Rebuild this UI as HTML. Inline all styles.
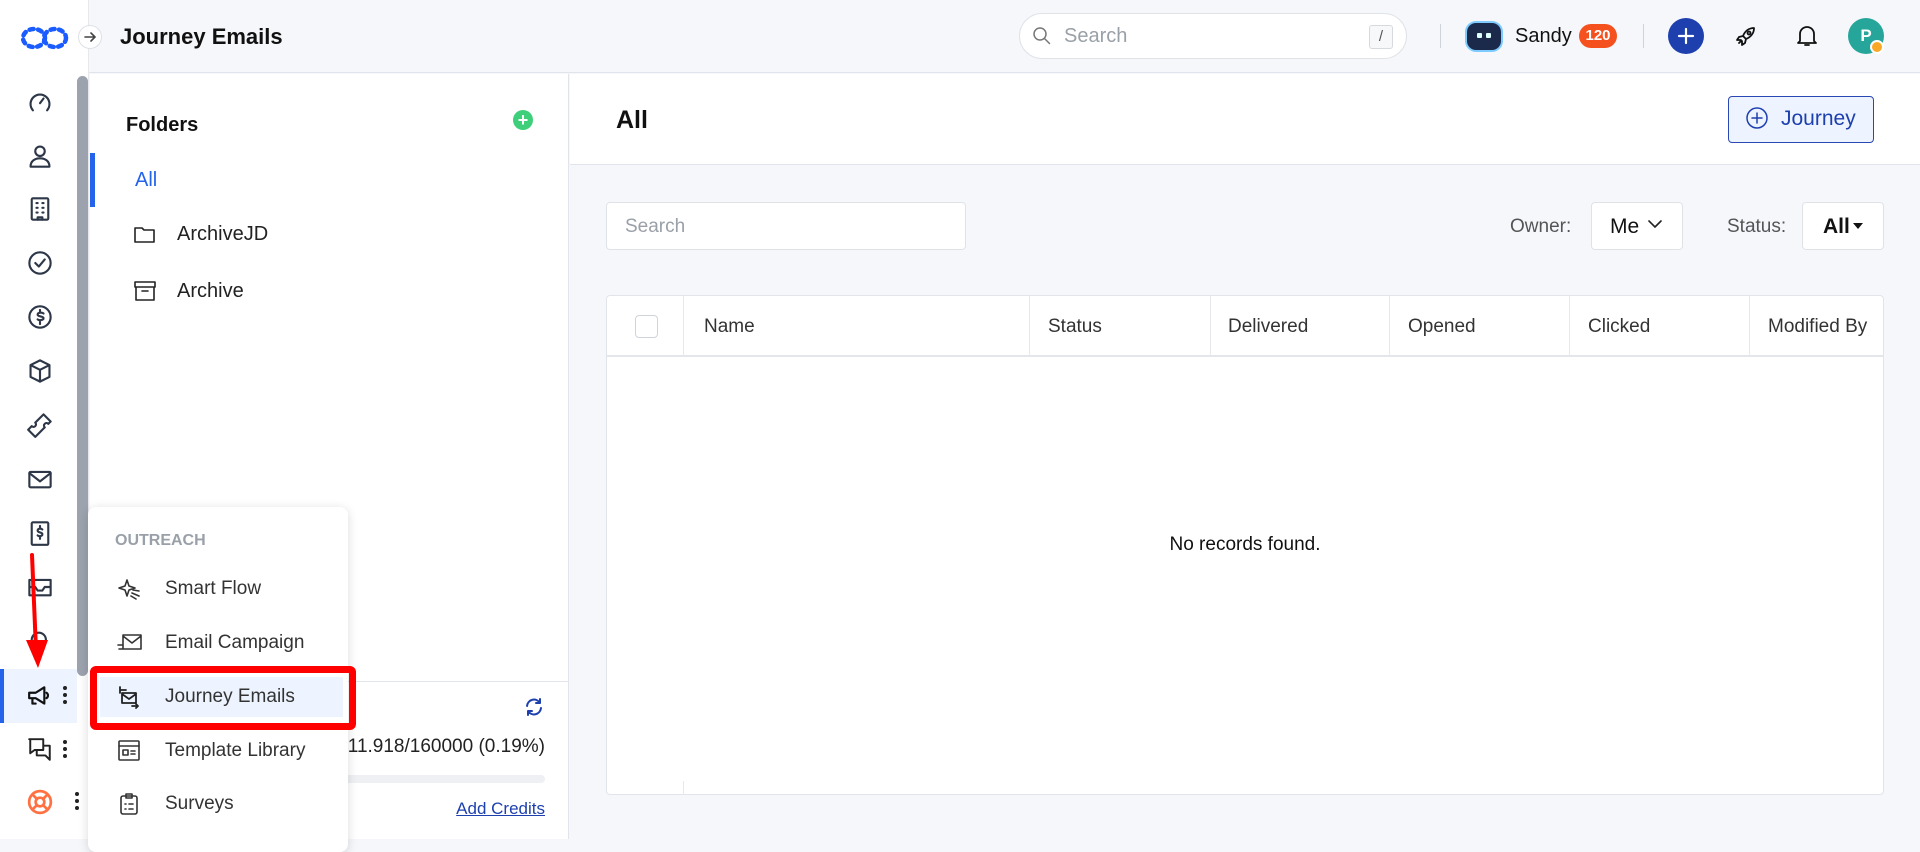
<!DOCTYPE html>
<html><head><meta charset="utf-8"><style>
*{box-sizing:border-box;margin:0;padding:0}
body{width:1920px;height:839px;overflow:hidden;background:#f5f7fb;font-family:"Liberation Sans",sans-serif;color:#1f2328;position:relative}
.abs{position:absolute}
.ic{position:absolute;fill:none;stroke:#2d3748;stroke-width:1.8;stroke-linecap:round;stroke-linejoin:round}
</style></head><body>
<div class="abs" style="left:0;top:0;width:1920px;height:73px;background:#f5f7fb;border-bottom:1px solid #e1e4ea"></div>
<div class="abs" style="left:0;top:0;width:89px;height:839px;background:#fff;border-right:1px solid #e6e8ec"></div>
<svg class="abs" style="left:20px;top:26px" width="50" height="24" viewBox="0 0 50 24"><g fill="none" stroke="#1a5cff" stroke-width="4.5" stroke-dasharray="4 4.5" stroke-linecap="round"><ellipse cx="14" cy="12" rx="11" ry="9"/><ellipse cx="35" cy="12" rx="11" ry="9"/></g></svg>
<div class="abs" style="left:78px;top:25px;width:24px;height:24px;border-radius:50%;background:#fff;border:1px solid #dde1e6"></div>
<svg class="abs" style="left:82px;top:29px" width="16" height="16" viewBox="0 0 16 16"><path d="M3 8h10M9 4l4 4-4 4" fill="none" stroke="#444" stroke-width="1.6" stroke-linecap="round"/></svg>
<div class="abs" style="left:120px;top:24px;font-size:22px;font-weight:bold;color:#111">Journey Emails</div>
<div class="abs" style="left:1019px;top:13px;width:388px;height:46px;border-radius:23px;background:#fff;border:1px solid #dfe3e8"></div>
<svg class="ic" style="left:1032px;top:26px;stroke:#777;stroke-width:1.5" width="20" height="20" viewBox="0 0 20 20"><circle cx="8" cy="8" r="6"/><path d="M12.5 12.5l5 5"/></svg>
<div class="abs" style="left:1064px;top:25px;font-size:20px;color:#9aa0a8">Search</div>
<div class="abs" style="left:1369px;top:25px;width:24px;height:24px;border:1px solid #d6d9de;border-radius:3px;background:#f7f8fa;font-size:15px;color:#555;text-align:center;line-height:22px">/</div>
<div class="abs" style="left:1440px;top:24px;width:1px;height:24px;background:#d0d4da"></div>
<div class="abs" style="left:1467px;top:23px;width:34px;height:27px;border-radius:9px;background:#1b2a4a;box-shadow:0 0 0 2px #7ecbff"></div>
<div class="abs" style="left:1477px;top:33px;width:5px;height:5px;background:#dff;border-radius:1px"></div><div class="abs" style="left:1486px;top:33px;width:5px;height:5px;background:#dff;border-radius:1px"></div>
<div class="abs" style="left:1515px;top:25px;font-size:20px;color:#111">Sandy</div>
<div class="abs" style="left:1579px;top:24px;width:38px;height:24px;border-radius:12px;background:#f4511e;color:#fff;font-size:15px;font-weight:bold;text-align:center;line-height:24px">120</div>
<div class="abs" style="left:1643px;top:24px;width:1px;height:24px;background:#d0d4da"></div>
<div class="abs" style="left:1668px;top:18px;width:36px;height:36px;border-radius:50%;background:#1e3fae"></div>
<svg class="abs" style="left:1676px;top:26px" width="20" height="20"><path d="M10 3v14M3 10h14" stroke="#fff" stroke-width="2.2" stroke-linecap="round"/></svg>
<svg class="ic" style="left:1734px;top:24px;stroke:#111" width="24" height="24" viewBox="0 0 24 24"><path d="M20 4c-5 0-9 3-11 8l3 3c5-2 8-6 8-11zM9 12l-4 1-2 3 4 0M12 15l-1 4-3 2 0-4M5 19l2-2"/><circle cx="15" cy="9" r="1.5"/></svg>
<svg class="ic" style="left:1796px;top:24px;stroke:#111" width="22" height="24" viewBox="0 0 22 24"><path d="M4 17V10a7 7 0 0 1 14 0v7l2 2H2zM9 21h4"/></svg>
<div class="abs" style="left:1848px;top:18px;width:36px;height:36px;border-radius:50%;background:#26a69a;color:#fff;font-weight:bold;font-size:17px;text-align:center;line-height:36px">P</div>
<div class="abs" style="left:1870px;top:40px;width:14px;height:14px;border-radius:50%;background:#f9a825;border:2px solid #fff"></div>

<svg class="ic" style="left:27px;top:89px" width="26" height="26" viewBox="0 0 22 22"><path d="M5 18a8 8 0 1 1 12 0M11 12l3-4"/></svg>
<svg class="ic" style="left:27px;top:143px" width="26" height="26" viewBox="0 0 22 22"><circle cx="11" cy="7" r="4"/><path d="M3 20c0-5 4-7 8-7s8 2 8 7z"/></svg>
<svg class="ic" style="left:27px;top:196px" width="26" height="26" viewBox="0 0 22 22"><rect x="4" y="2" width="14" height="18" rx="1"/><path d="M8 6h1M13 6h1M8 10h1M13 10h1M8 14h1M13 14h1M9 20v-2h4v2"/></svg>
<svg class="ic" style="left:27px;top:250px" width="26" height="26" viewBox="0 0 22 22"><circle cx="11" cy="11" r="9"/><path d="M7 11l3 3 5-6"/></svg>
<svg class="ic" style="left:27px;top:304px" width="26" height="26" viewBox="0 0 22 22"><circle cx="11" cy="11" r="9"/><path d="M14 8c-1-1-5-1-5 1s5 1 5 3-4 2-5 1M11 5v2M11 15v2"/></svg>
<svg class="ic" style="left:27px;top:358px" width="26" height="26" viewBox="0 0 22 22"><path d="M11 2l8 4v10l-8 4-8-4V6zM3 6l8 4 8-4M11 10v10"/></svg>
<svg class="ic" style="left:27px;top:412px" width="26" height="26" viewBox="0 0 22 22"><path d="M14 2l6 6-2 2a2 2 0 0 0-3 3l-2 2L7 21l-6-6 3-3a2 2 0 0 0 3-3z"/></svg>
<svg class="ic" style="left:27px;top:466px" width="26" height="26" viewBox="0 0 22 22"><rect x="2" y="5" width="18" height="13" rx="1"/><path d="M2 6l9 7 9-7"/></svg>
<svg class="ic" style="left:27px;top:520px" width="26" height="26" viewBox="0 0 22 22"><rect x="4" y="2" width="14" height="19" rx="1"/><path d="M13 8c-1-1-4-1-4 1s4 1 4 3-3 2-4 1M11 5v2M11 14v2"/></svg>
<svg class="ic" style="left:27px;top:574px" width="26" height="26" viewBox="0 0 22 22"><path d="M2 5h18v13H2zM2 11h5l2 3h4l2-3h5"/></svg>
<svg class="ic" style="left:27px;top:628px" width="26" height="26" viewBox="0 0 22 22"><path d="M4 10a6 6 0 0 1 12 0M4 10v6h4M16 10l-2 6"/></svg>
<div class="abs" style="left:0;top:669px;width:77px;height:54px;background:#eef4ff"></div>
<div class="abs" style="left:0;top:669px;width:4px;height:54px;background:#2563eb"></div>
<svg class="ic" style="left:27px;top:684px;stroke:#111;stroke-width:2" width="26" height="24" viewBox="0 0 24 22"><path d="M2 8h6l8-5v15l-8-5H2zM5 13v5h3M18 8a3 3 0 0 1 0 5"/></svg>
<div class="abs" style="left:63px;top:686px;width:4px;height:4px;border-radius:50%;background:#222;box-shadow:0 7px 0 #222,0 14px 0 #222"></div>
<svg class="ic" style="left:27px;top:737px;stroke:#222" width="26" height="26" viewBox="0 0 24 24"><path d="M2 2h13v10H7l-4 3V2zM9 12v5h8l4 4V8h-6"/></svg>
<div class="abs" style="left:63px;top:740px;width:4px;height:4px;border-radius:50%;background:#222;box-shadow:0 7px 0 #222,0 14px 0 #222"></div>
<svg class="abs" style="left:27px;top:789px" width="26" height="26" viewBox="0 0 24 24"><g fill="none" stroke="#ff7043" stroke-width="2.5"><circle cx="12" cy="12" r="10"/><circle cx="12" cy="12" r="4"/><path d="M5 5l4 4M19 5l-4 4M5 19l4-4M19 19l-4-4"/></g></svg>
<div class="abs" style="left:75px;top:792px;width:4px;height:4px;border-radius:50%;background:#222;box-shadow:0 7px 0 #222,0 14px 0 #222"></div>
<div class="abs" style="left:77px;top:76px;width:11px;height:600px;border-radius:6px;background:#9ca3af"></div>

<div class="abs" style="left:90px;top:74px;width:479px;height:765px;background:#fff;border-right:1px solid #e1e4ea"></div>
<div class="abs" style="left:126px;top:114px;font-size:20px;font-weight:bold;color:#111">Folders</div>
<div class="abs" style="left:513px;top:110px;width:20px;height:20px;border-radius:50%;background:#3ecf7a;color:#fff;font-size:18px;font-weight:bold;text-align:center;line-height:20px">+</div>
<div class="abs" style="left:90px;top:153px;width:5px;height:54px;background:#2563eb"></div>
<div class="abs" style="left:135px;top:169px;font-size:20px;color:#2563eb">All</div>
<svg class="ic" style="left:134px;top:225px;stroke:#222;stroke-width:1.6" width="22" height="20" viewBox="0 0 22 20"><path d="M1 3h7l2 2h10v12H1z"/></svg>
<div class="abs" style="left:177px;top:223px;font-size:20px;color:#222">ArchiveJD</div>
<svg class="ic" style="left:134px;top:281px;stroke:#222;stroke-width:1.6" width="22" height="20" viewBox="0 0 22 20"><path d="M1 1h20v5H1zM2 6v13h18V6M8 10h6"/></svg>
<div class="abs" style="left:177px;top:280px;font-size:20px;color:#222">Archive</div>
<div class="abs" style="left:90px;top:681px;width:479px;height:1px;background:#e1e4ea"></div>
<svg class="ic" style="left:524px;top:697px;stroke:#1e40af;stroke-width:2" width="20" height="20" viewBox="0 0 20 20"><path d="M3 9a7 7 0 0 1 13-3M17 11a7 7 0 0 1-13 3M16 2v4h-4M4 18v-4h4"/></svg>
<div class="abs" style="left:345px;top:736px;font-size:19px;color:#222;width:200px;text-align:right">11.918/160000 (0.19%)</div>
<div class="abs" style="left:330px;top:775px;width:215px;height:8px;border-radius:4px;background:#eef0f3"></div>
<div class="abs" style="left:430px;top:799px;font-size:17px;color:#1e40af;text-decoration:underline;width:115px;text-align:right">Add Credits</div>

<div class="abs" style="left:570px;top:74px;width:1350px;height:91px;background:#fff;border-bottom:1px solid #e1e4ea"></div>
<div class="abs" style="left:616px;top:106px;font-size:25px;font-weight:600;color:#111">All</div>
<div class="abs" style="left:1728px;top:96px;width:146px;height:47px;border:1.5px solid #2a48b3;border-radius:4px;background:#eef4ff"></div>
<svg class="ic" style="left:1745px;top:106px;stroke:#1e3fae;stroke-width:1.5" width="24" height="24" viewBox="0 0 24 24"><circle cx="12" cy="12" r="10"/><path d="M12 7v10M7 12h10"/></svg>
<div class="abs" style="left:1781px;top:107px;font-size:21px;color:#1e3fae">Journey</div>
<div class="abs" style="left:606px;top:202px;width:360px;height:48px;background:#fff;border:1px solid #dfe3e8;border-radius:4px"></div>
<div class="abs" style="left:625px;top:216px;font-size:19px;color:#9aa0a8">Search</div>
<div class="abs" style="left:1510px;top:216px;font-size:19px;color:#555">Owner:</div>
<div class="abs" style="left:1591px;top:202px;width:92px;height:48px;background:#fff;border:1px solid #dfe3e8;border-radius:4px"></div>
<div class="abs" style="left:1610px;top:215px;font-size:21px;color:#111">Me</div>
<svg class="ic" style="left:1648px;top:219px;stroke:#222;stroke-width:1.6" width="14" height="10"><path d="M1 2l6 6 6-6"/></svg>
<div class="abs" style="left:1727px;top:216px;font-size:19px;color:#555">Status:</div>
<div class="abs" style="left:1802px;top:202px;width:82px;height:48px;background:#fff;border:1px solid #dfe3e8;border-radius:4px"></div>
<div class="abs" style="left:1823px;top:215px;font-size:21px;font-weight:600;color:#111">All</div>
<div class="abs" style="left:1853px;top:223px;width:0;height:0;border-left:5px solid transparent;border-right:5px solid transparent;border-top:6px solid #111"></div>
<div class="abs" style="left:606px;top:295px;width:1278px;height:500px;background:#fff;border:1px solid #e1e4ea;border-radius:4px"></div>
<div class="abs" style="left:606px;top:355px;width:1278px;height:2px;background:#e3e6ea"></div>
<div class="abs" style="left:635px;top:315px;width:23px;height:23px;border:1.5px solid #cfd4da;border-radius:4px;background:#fff"></div>
<div class="abs" style="left:683px;top:296px;width:1px;height:60px;background:#e6e8ec"></div>
<div class="abs" style="left:1029px;top:296px;width:1px;height:60px;background:#e6e8ec"></div>
<div class="abs" style="left:1210px;top:296px;width:1px;height:60px;background:#e6e8ec"></div>
<div class="abs" style="left:1389px;top:296px;width:1px;height:60px;background:#e6e8ec"></div>
<div class="abs" style="left:1569px;top:296px;width:1px;height:60px;background:#e6e8ec"></div>
<div class="abs" style="left:1749px;top:296px;width:1px;height:60px;background:#e6e8ec"></div>
<div class="abs" style="left:683px;top:781px;width:1px;height:14px;background:#e6e8ec"></div>
<div class="abs" style="left:704px;top:316px;font-size:19px;color:#333">Name</div>
<div class="abs" style="left:1048px;top:316px;font-size:19px;color:#333">Status</div>
<div class="abs" style="left:1228px;top:316px;font-size:19px;color:#333">Delivered</div>
<div class="abs" style="left:1408px;top:316px;font-size:19px;color:#333">Opened</div>
<div class="abs" style="left:1588px;top:316px;font-size:19px;color:#333">Clicked</div>
<div class="abs" style="left:1768px;top:316px;font-size:19px;color:#333;white-space:nowrap">Modified By</div>
<div class="abs" style="left:1045px;top:534px;width:400px;text-align:center;font-size:19px;color:#111">No records found.</div>

<div class="abs" style="left:88px;top:507px;width:260px;height:345px;background:#fff;border-radius:8px;box-shadow:0 2px 10px rgba(0,0,0,.15)"></div>
<div class="abs" style="left:115px;top:532px;font-size:16px;font-weight:bold;color:#9aa0a8">OUTREACH</div>
<div class="abs" style="left:100px;top:677px;width:243px;height:40px;background:#eef4ff"></div>
<svg class="ic" style="left:118px;top:578px;stroke:#333;stroke-width:1.6" width="24" height="22" viewBox="0 0 24 22"><path d="M9 2l2 6 6 2-6 2-2 6-2-6-6-2 6-2zM14 15l7 3M15 12l6 1M13 18l5 3"/></svg>
<div class="abs" style="left:165px;top:578px;font-size:19px;color:#333">Smart Flow</div>
<svg class="ic" style="left:117px;top:633px;stroke:#333;stroke-width:1.6" width="26" height="20" viewBox="0 0 26 20"><path d="M6 2h18v14H6zM6 3l9 7 9-7M1 12h4M2 16h4"/></svg>
<div class="abs" style="left:165px;top:632px;font-size:19px;color:#333">Email Campaign</div>
<svg class="ic" style="left:117px;top:685px;stroke:#222;stroke-width:1.8" width="24" height="24" viewBox="0 0 24 24"><path d="M3 5h6M3 2v6M5 8h14v10H5zM5 9l7 5 7-5M15 21h6M19 19l2 2-2 2"/></svg>
<div class="abs" style="left:165px;top:686px;font-size:19px;color:#333">Journey Emails</div>
<svg class="ic" style="left:117px;top:740px;stroke:#333;stroke-width:1.6" width="24" height="22" viewBox="0 0 24 22"><rect x="2" y="1" width="20" height="19" rx="1"/><path d="M2 6h20M6 10h5v5H6zM14 11h4M14 14h4"/></svg>
<div class="abs" style="left:165px;top:740px;font-size:19px;color:#333">Template Library</div>
<svg class="ic" style="left:118px;top:792px;stroke:#333;stroke-width:1.6" width="22" height="24" viewBox="0 0 22 24"><rect x="3" y="4" width="16" height="18" rx="2"/><path d="M8 2h6v4H8zM7 12h1M11 12h4M7 17h1M11 17h4"/></svg>
<div class="abs" style="left:165px;top:793px;font-size:19px;color:#333">Surveys</div>
<div class="abs" style="left:90px;top:666px;width:266px;height:64px;border:7px solid #ff0000;border-radius:6px"></div>
<svg class="abs" style="left:0;top:540px" width="80" height="140" viewBox="0 0 80 140"><path d="M32 15L36 110" stroke="#ff0000" stroke-width="4" stroke-linecap="round"/><path d="M26 100L48 100L38 128z" fill="#ff0000"/></svg>
</body></html>
